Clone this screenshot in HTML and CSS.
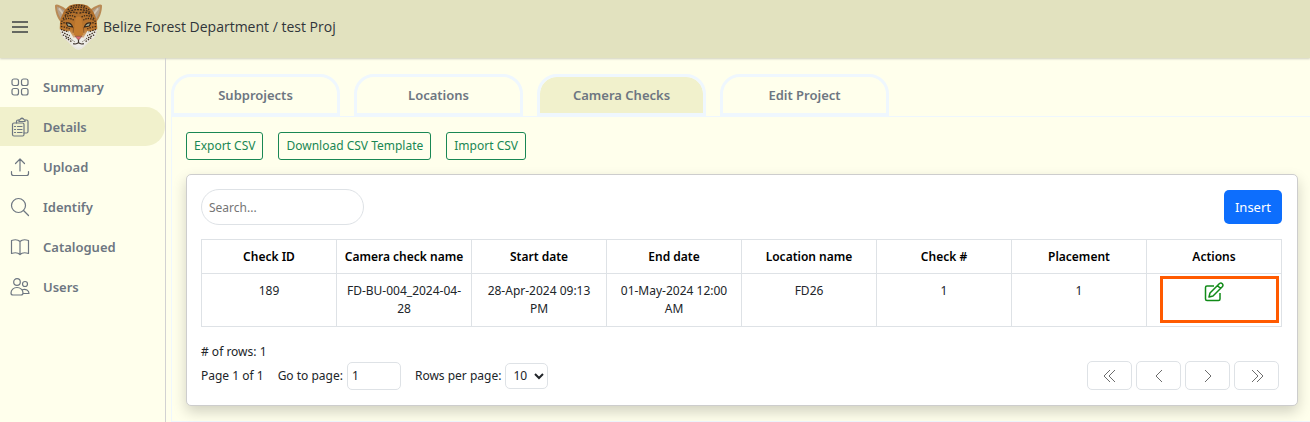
FILE: index.html
```html
<!DOCTYPE html>
<html lang="en">
<head>
<meta charset="utf-8">
<title>Camera Checks</title>
<link rel="stylesheet" href="styles.css">
</head>
<body>
<header class="topbar">
  <button class="menu-button" type="button" aria-label="Menu">
    <svg width="18" height="14" viewBox="0 0 18 14" fill="none" stroke="#3c4043" stroke-width="1.6"><path d="M1 2h16M1 7h16M1 12h16"/></svg>
  </button>
  <svg class="logo" width="49" height="47" viewBox="0 0 50 47" aria-hidden="true">
    <defs>
      <linearGradient id="fur" x1="0" y1="0" x2="0" y2="1"><stop offset="0" stop-color="#a96a2a"/><stop offset=".55" stop-color="#bd772d"/><stop offset=".8" stop-color="#e2c9ab"/><stop offset="1" stop-color="#f5f4f0"/></linearGradient>
    </defs>
    <path d="M8 20C3 15 1 8 1 2Q2 0 6 2Q13 5 17 10L10 22Z" fill="#b98a55"/>
    <path d="M42 20C47 15 49 8 49 2Q48 0 44 2Q37 5 33 10L40 22Z" fill="#b98a55"/>
    <path d="M3 3Q11 6 14 11L9 18Q3 11 3 3ZM47 3Q39 6 36 11L41 18Q47 11 47 3Z" fill="#b3a08a"/>
    <path d="M5 5Q9 9 11 15M45 5Q41 9 39 15" fill="none" stroke="#d3c6b2" stroke-width="2"/>
    <path d="M16 2Q25-1 34 2C41 7 44 15 44 23Q45 32 38 37L31 44Q25 50 19 44L12 37Q5 32 6 23C6 15 9 7 16 2Z" fill="url(#fur)"/>
    <path d="M6 26Q11 29 16 28L20 35L25 39L30 35L34 28Q39 29 44 26Q44 34 38 37L31 44Q25 50 19 44L12 37Q6 33 6 26Z" fill="#e9e7df"/>
    <g fill="none" stroke="#38281a" stroke-width="1.3">
      <path stroke-dasharray="1.5 1.2" d="M17 3.500Q25 0 33 3.500M14 6.500Q25 1 36 6.500"/>
      <path stroke-dasharray="2 1" d="M12 9.500Q25 3 38 9.500M11 12.500Q18 7 24 10M39 12.500Q32 7 26 10"/>
      <path stroke-dasharray="1.4 1.1" d="M9 15.500Q16 10 22 14M41 15.500Q34 10 28 14M7.500 18.500Q14 13 20 17M42.500 18.500Q36 13 30 17"/>
      <path stroke-dasharray="1.500 1.200" d="M7 21Q10 19 13 20M43 21Q40 19 37 20M7 23.500Q12 24 16 26M43 23.500Q38 24 34 26M7 26.500L15 29M43 26.500L35 29M8 29L16 33M42 29L34 33M9 32L17 36M41 32L33 36M12 35L18 39M38 35L32 39"/>
    </g>
    <path d="M22 15Q25 12 28 15L30 32Q25 36 20 32Z" fill="#c47c30"/>
    <path d="M20 35Q25 33 30 35L32 41Q25 49 18 41Z" fill="#eeede8"/>
    <path d="M12.500 20Q17 19 19 24L14 23ZM37.500 20Q33 19 31 24L36 23Z" fill="#a5ab8d" stroke="#33251b" stroke-width="1.1"/>
    <path d="M20 24L19.500 30M30 24L30.500 30" stroke="#8d5724" stroke-width="1"/>
    <path d="M21.500 33.500H28.500L25 37.500Z" fill="#dc6a6e" stroke="#6b3f2b" stroke-width=".5"/>
    <path d="M25 37V40M19.500 41Q23 42 25 40Q27 42 30.500 41" fill="none" stroke="#40352e" stroke-width="1.2"/>
    <path stroke-dasharray="1 1.500" d="M18 37L21 39M32 37L29 39" stroke="#48372b"/>
  </svg>
  <span class="title">Belize Forest Department / test Proj</span>
</header>
<div class="shell">
  <nav class="sidebar">
    <a class="nav-item" href="#summary"><svg class="icon" viewBox="0 0 20 20"><rect x="2" y="2" width="6.500" height="6.500" rx="2"/><rect x="11.500" y="2" width="6.500" height="6.500" rx="2"/><rect x="2" y="11.500" width="6.500" height="6.500" rx="2"/><rect x="11.500" y="11.500" width="6.500" height="6.500" rx="2"/></svg>Summary</a>
    <a class="nav-item active" href="#details"><svg class="icon" viewBox="0 0 20 20"><path d="M6.500 6V4.500Q6.500 3 8 3H9M15 3H16.500Q18 3 18 4.500V14.500Q18 16 16.500 16H14"/><path d="M9 4.500V3Q10 3 10.500 2Q12 .5 13.500 2Q14 3 15 3V4.500Z"/><rect x="2.500" y="6" width="11.500" height="13" rx="1.500"/><path d="M7.500 9.500H12M7.500 12.500H12M7.500 15.500H12M4.500 9.500H5.500M4.500 12.500H5.500M4.500 15.500H5.500"/></svg>Details</a>
    <a class="nav-item" href="#upload"><svg class="icon" viewBox="0 0 20 20"><path d="M10 14V2M5.500 6.500L10 2L14.500 6.500M1.500 14.500V16.500Q1.500 18.500 3.500 18.500H16.500Q18.500 18.500 18.500 16.500V14.500"/></svg>Upload</a>
    <a class="nav-item" href="#identify"><svg class="icon" viewBox="0 0 20 20"><circle cx="8.500" cy="8.500" r="7"/><path d="M13.500 13.500L18.500 18.500"/></svg>Identify</a>
    <a class="nav-item" href="#catalogued"><svg class="icon" viewBox="0 0 20 20"><path d="M10 4.500C8 2.500 4.500 2.500 1.500 3.500V16.500C4.500 15.500 8 15.500 10 17.500C12 15.500 15.500 15.500 18.500 16.500V3.500C15.500 2.500 12 2.500 10 4.500ZM10 4.500V17.500"/></svg>Catalogued</a>
    <a class="nav-item" href="#users"><svg class="icon" viewBox="0 0 20 20"><circle cx="7" cy="5" r="3.300"/><circle cx="15" cy="7" r="2.500"/><path d="M7 10.500C3.500 10.500 1 13 1 16Q1 18 3 18H11Q13 18 13 16C13 13 10.500 10.500 7 10.500ZM12 12.800C16 11.500 19 13.500 19 16.500H13"/></svg>Users</a>
  </nav>
  <main class="main">
    <div class="tabs">
      <button class="tab" type="button">Subprojects</button>
      <button class="tab" type="button">Locations</button>
      <button class="tab selected" type="button">Camera Checks</button>
      <button class="tab" type="button">Edit Project</button>
    </div>
    <section class="panel">
      <div class="actions">
        <button class="outline-button" type="button">Export CSV</button>
        <button class="outline-button" type="button">Download CSV Template</button>
        <button class="outline-button" type="button">Import CSV</button>
      </div>
      <div class="card">
        <div class="toolbar">
          <input class="search" type="text" placeholder="Search..." aria-label="Search">
          <button class="insert" type="button">Insert</button>
        </div>
        <table class="grid">
          <thead><tr><th>Check ID</th><th>Camera check name</th><th>Start date</th><th>End date</th><th>Location name</th><th>Check #</th><th>Placement</th><th>Actions</th></tr></thead>
          <tbody><tr><td>189</td><td>FD-BU-004_2024-04-28</td><td>28-Apr-2024 09:13 PM</td><td>01-May-2024 12:00 AM</td><td>FD26</td><td>1</td><td>1</td>
            <td class="action-cell"><button class="edit" type="button" aria-label="Edit"><svg width="20" height="20" viewBox="0 0 20 20" fill="none" stroke="#118a18" stroke-width="1.500" stroke-linejoin="round"><path d="M10 4H3Q1.500 4 1.500 5.500V17Q1.500 18.500 3 18.500H14.500Q16 18.500 16 17V11"/><path d="M5 15L6 11L15.500 1.500Q17 .5 18.300 1.700Q19.500 3 18.500 4.500L9 14ZM13.500 3.500L16.500 6.500"/></svg></button><span class="highlight"></span></td></tr></tbody>
        </table>
        <div class="row-count"># of rows: 1</div>
        <div class="footer">
          <span class="page-of">Page 1 of 1</span>
          <label class="field">Go to page: <input class="page-input" type="text" value="1"></label>
          <label class="field">Rows per page: <select class="page-size"><option>10</option><option>20</option></select></label>
          <div class="pager">
            <button class="page-button" type="button" aria-label="First page"><svg class="chevron" viewBox="0 0 14 14"><path d="M7 1L1 7L7 13M12 1L6 7L12 13"/></svg></button>
            <button class="page-button" type="button" aria-label="Previous page"><svg class="chevron" viewBox="0 0 14 14"><path d="M10 1L4 7L10 13"/></svg></button>
            <button class="page-button" type="button" aria-label="Next page"><svg class="chevron" viewBox="0 0 14 14"><path d="M4 1L10 7L4 13"/></svg></button>
            <button class="page-button" type="button" aria-label="Last page"><svg class="chevron" viewBox="0 0 14 14"><path d="M2 1L8 7L2 13M7 1L13 7L7 13"/></svg></button>
          </div>
        </div>
      </div>
    </section>
  </main>
</div>
</body>
</html>
```
FILE: styles.css
```css
* { box-sizing: border-box; }
html, body { margin: 0; }
body {
  min-height: 100vh;
  display: flex;
  flex-direction: column;
  background: #ffffec;
  color: #212529;
  font-family: "Noto Sans", "Open Sans", sans-serif;
  font-size: 12px;
  line-height: 18px;
}
button, input, select { font: inherit; margin: 0; }

.topbar {
  display: flex;
  align-items: center;
  height: 58px;
  padding: 0 11px 4px;
  background: #e2e2bf;
  box-shadow: 0 1px 2px #d0d0c0;
}
.menu-button { display: flex; padding: 0; border: 0; background: none; }
.logo { margin: 0 0 2px 25px; }
.title { font-family: "Open Sans", sans-serif; font-size: 14px; color: #30353a; }

.shell { flex: 1; display: flex; }
.sidebar {
  flex: 0 0 166px;
  display: flex;
  flex-direction: column;
  padding-top: 9px;
  border-right: 1px solid #d2d2d2;
}
.nav-item {
  display: flex;
  align-items: center;
  gap: 13px;
  height: 39px;
  margin-bottom: 1px;
  padding-left: 10px;
  border-radius: 0 20px 20px 0;
  color: #6d7681;
  font-size: 13px;
  font-weight: 600;
  text-decoration: none;
}
.active { background: #f1f1cc; }
.icon { width: 20px; height: 20px; fill: none; stroke: #6d7681; stroke-width: 1.2; stroke-linecap: round; stroke-linejoin: round; }

.main { flex: 1; min-width: 0; padding: 16px 0 0 5px; }
.tabs { display: flex; gap: 14px; }
.tab {
  width: 169px;
  height: 42px;
  border: 3px solid #eff7fe;
  border-radius: 20px 20px 0 0;
  background: none;
  color: #6d7681;
  font-size: 13px;
  font-weight: 600;
}
.selected { background: #f1f1cc; background-clip: padding-box; }
.panel { border: 1px solid #eff7fe; border-right: 0; padding: 15px 12px 15px 14px; }
.actions { display: flex; gap: 15px; }
.outline-button {
  height: 28px;
  padding: 0 7px;
  border: 1px solid #198754;
  border-radius: 3px;
  background: none;
  color: #198754;
}
.card {
  margin-top: 14px;
  padding: 14px 15px 15px 14px;
  border: 1px solid #cdcdcd;
  border-radius: 5px;
  background: #fff;
  box-shadow: 0 6px 14px rgba(0, 0, 0, .18);
}
.toolbar { display: flex; justify-content: space-between; align-items: center; }
.search { width: 163px; height: 36px; padding: 0 7px; border: 1px solid #dee2e6; border-radius: 18px; outline: 0; }
.search::placeholder { color: #757575; }
.insert { height: 34px; padding: 0 11px; border: 0; border-radius: 5px; background: #0d6efd; color: #fff; font-size: 13px; }

.grid { width: 100%; margin-top: 14px; border-collapse: collapse; table-layout: fixed; text-align: center; }
.grid th, .grid td { border: 1px solid #dee2e6; padding: 8px 7px; vertical-align: top; }
.grid th { color: #000; font-weight: 600; white-space: nowrap; padding: 8px 2px 7px; }
.grid .action-cell { position: relative; }
.edit { display: inline-flex; padding: 0; border: 0; background: none; }
.highlight { position: absolute; inset: 2px 2px 3px 13px; border: 3px solid #ff5a00; }

.row-count { margin-top: 16px; }
.footer { display: flex; align-items: center; gap: 14px; }
.field { display: flex; align-items: center; gap: 4px; }
.page-input, .page-size { border: 1px solid #dee2e6; border-radius: 5px; background: #fff; color: #212529; }
.page-input { width: 54px; height: 28px; padding: 0 4px; }
.page-size { width: 43px; height: 26px; padding: 0 3px; }
.pager { display: flex; gap: 4px; margin-left: auto; padding-right: 3px; }
.page-button { display: flex; align-items: center; justify-content: center; width: 45px; height: 29px; padding: 0; border: 1px solid #dee2e6; border-radius: 5px; background: #fff; }
.chevron { width: 14px; height: 14px; fill: none; stroke: #6c6c6c; stroke-width: 1; }
```
